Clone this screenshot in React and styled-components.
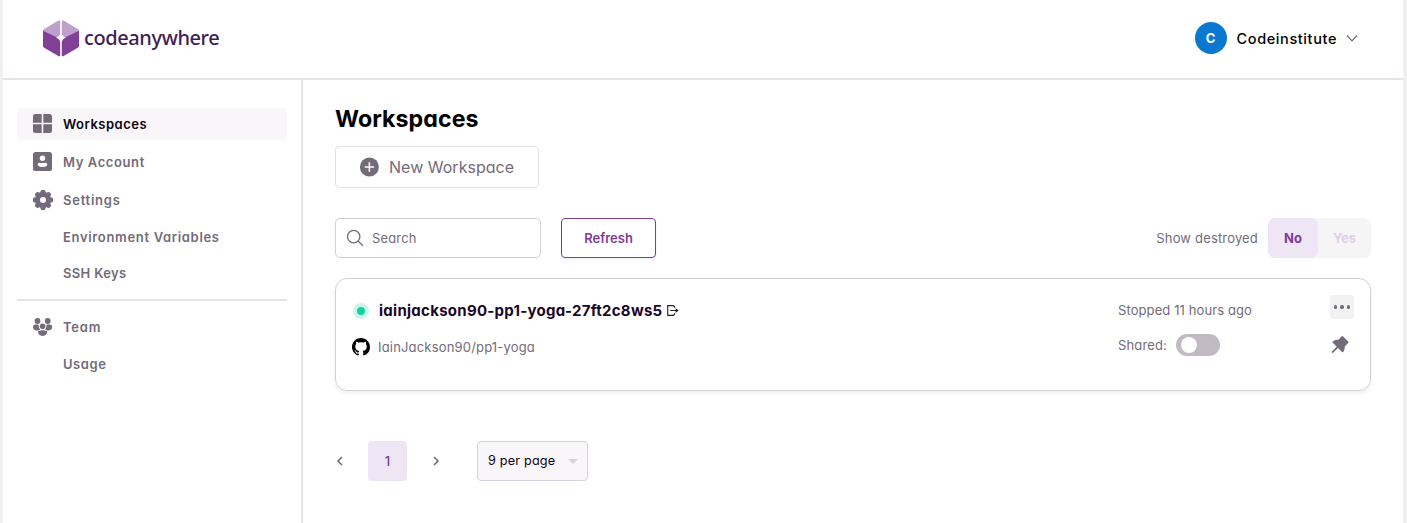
import React from "react";
import styled, { createGlobalStyle, css } from "styled-components";
import { AiFillPushpin } from "react-icons/ai";

const Global = createGlobalStyle`
  * { box-sizing: border-box; }
  body {
    margin: 0;
    background: #f1eff2;
    font-family: Inter, "Liberation Sans", sans-serif;
    font-feature-settings: "cv11" 1;
    color: #736b7a;
    overflow: hidden;
  }
  button { font: inherit; font-feature-settings: inherit; padding: 0; }
  svg { display: block; flex: none; }
`;

const Text = styled.span`
  font-size: ${(p) => p.$size || 13.5}px;
  font-weight: ${(p) => p.$weight || 500};
  letter-spacing: ${(p) => p.$track || 0}px;
  color: ${(p) => p.$color || "inherit"};
  white-space: nowrap;
  line-height: 20px;
`;

const NavText = styled(Text)`
  font-size: 13px;
  font-weight: 600;
`;

const Page = styled.div`
  height: 523px;
  margin: 0 4px 0 3px;
  background: #fff;
  display: flex;
  flex-direction: column;
`;

const Header = styled.header`
  height: 80px;
  flex: none;
  border-bottom: 2px solid #e7e1e9;
  display: flex;
  align-items: center;
  justify-content: space-between;
  padding: 0 45px 2px 40px;
`;

const Brand = styled.div`
  display: flex;
  align-items: center;
  gap: 5px;
`;

const BrandName = styled.span`
  font-family: "Noto Sans", sans-serif;
  font-size: 20px;
  font-weight: 500;
  letter-spacing: -0.4px;
  line-height: 24px;
  color: #421d55;
  padding-bottom: 1px;
`;

const Profile = styled.div`
  display: flex;
  align-items: center;
`;

const ProfileName = styled(Text)`
  padding-top: 1px;
`;

const ProfileCaret = styled.div`
  margin-left: 9px;
`;

const Avatar = styled.div`
  width: 32px;
  height: 32px;
  border-radius: 50%;
  background: #0b78d0;
  color: #fff;
  display: grid;
  place-items: center;
  margin-right: 10px;
`;

const Body = styled.div`
  flex: 1;
  display: flex;
`;

const Sidebar = styled.nav`
  width: 300px;
  flex: none;
  border-right: 2px solid #e7e1e9;
  padding: 28px 14px 0;
`;

const NavItem = styled.a`
  display: flex;
  align-items: center;
  height: 32px;
  margin-bottom: ${(p) => (p.$sub ? 4 : 6)}px;
  padding-left: ${(p) => (p.$sub ? 46 : 15)}px;
  gap: 10px;
  border-radius: 4px;
  ${(p) =>
    p.$active &&
    css`
      background: #f8f6f9;
      color: #0d0412;
    `}
`;

const SubList = styled.div`
  margin-top: -1px;
`;

const Divider = styled.hr`
  height: 2px;
  border: 0;
  background: #e7e1e9;
  margin: 10px 0;
`;

const Main = styled.main`
  flex: 1;
  padding: 24px 32px 0;
`;

const Title = styled.h1`
  margin: 0 0 12px;
  font-size: 23.2px;
  line-height: 30px;
  font-weight: 700;
  letter-spacing: 0.05px;
  color: #000;
`;

const NewButton = styled.button`
  width: 204px;
  height: 42px;
  background: #fff;
  border: 1px solid #e3e1e5;
  border-radius: 4px;
  display: flex;
  align-items: center;
  padding-left: 23px;
  gap: 10px;
  color: #736b7a;
`;

const Tools = styled.div`
  display: flex;
  align-items: center;
  margin-top: 30px;
  height: 40px;
`;

const SearchBox = styled.div`
  width: 206px;
  height: 40px;
  border: 1px solid #d3cfd8;
  border-radius: 5px;
  display: flex;
  align-items: center;
  gap: 8px;
  padding-left: 10px;
`;

const RefreshButton = styled.button`
  width: 95px;
  height: 40px;
  margin-left: 20px;
  background: #fff;
  border: 1px solid #7d3c98;
  border-radius: 4px;
  color: #7d3c98;
  box-shadow: 0 2px 3px rgba(0, 0, 0, 0.05);
  display: flex;
  align-items: center;
  justify-content: center;
`;

const Filter = styled.div`
  margin-left: auto;
  display: flex;
  align-items: center;
  gap: 10px;
`;

const Segments = styled.div`
  display: flex;
  width: 103px;
  height: 40px;
  border-radius: 7px;
  background: #f5f5f5;
`;

const Segment = styled.div`
  width: ${(p) => (p.$on ? 50 : 53)}px;
  border-radius: 7px;
  display: grid;
  place-items: center;
  background: ${(p) => (p.$on ? "#eee5f5" : "transparent")};
  color: ${(p) => (p.$on ? "#7d3c98" : "#e2cfec")};
`;

const Card = styled.section`
  margin-top: 20px;
  height: 113px;
  border: 1px solid #d3cfd8;
  border-radius: 12px;
  box-shadow: 0 2px 4px rgba(0, 0, 0, 0.07);
  display: flex;
  padding: 0 16px;
`;

const Info = styled.div`
  flex: 1;
  padding-top: 21px;
`;

const Line = styled.div`
  display: flex;
  align-items: center;
  height: 22px;
  margin-bottom: ${(p) => p.$gap || 0}px;
`;

const Status = styled.span`
  width: 16px;
  height: 16px;
  border-radius: 50%;
  border: 4px solid #ccf5e9;
  background: #14cf9e;
  margin: 0 10px 0 1px;
`;

const OpenLink = styled.a`
  margin-left: 5px;
  padding-bottom: 1px;
`;

const RepoName = styled(Text)`
  margin-left: 8px;
`;

const State = styled.div`
  width: 212px;
  padding-top: 20px;
`;

const Switch = styled.span`
  width: 44px;
  height: 22px;
  border-radius: 11px;
  background: #c1bac3;
  padding: 3px 5px;
  margin-left: 9px;

  &::after {
    content: "";
    display: block;
    width: 16px;
    height: 16px;
    border-radius: 50%;
    background: #fff;
  }
`;

const Actions = styled.div`
  width: 24px;
  padding-top: 16px;
  display: flex;
  flex-direction: column;
  gap: 14px;
`;

const MoreButton = styled.button`
  width: 24px;
  height: 24px;
  border: 0;
  border-radius: 3px;
  background: #f2f2f2;
  display: flex;
  align-items: center;
  justify-content: center;
  gap: 3px;
`;

const Dot = styled.i`
  width: 3.6px;
  height: 3.6px;
  border-radius: 50%;
  background: #736b7a;
`;

const Pager = styled.div`
  margin-top: 50px;
  height: 40px;
  display: flex;
  align-items: center;
`;

const PageNumber = styled.div`
  width: 39px;
  height: 40px;
  border-radius: 4px;
  background: #eee5f5;
  display: grid;
  place-items: center;
  margin: 0 24px 0 23px;
`;

const PerPage = styled.div`
  width: 111px;
  height: 40px;
  margin-left: 36px;
  border: 1px solid #d8d0dc;
  border-radius: 4px;
  background: #f8f6f9;
  display: flex;
  align-items: center;
  justify-content: space-between;
  padding: 0 9px 0 10px;
`;

const Logo = () => (
  <svg width="36" height="37" viewBox="0 0 36 37">
    <path d="M16 .4Q17.2 0 17.2 1.4V14.5Q16.3 17 13.5 17.6L0.3 10.5Q0 9.7.8 9.2L14.2 1.2Z" fill="#bda1cc" />
    <path d="M20 .4Q18.8 0 18.8 1.4V14.5Q19.7 17 22.5 17.6L35.7 10.5Q36 9.7 35.2 9.2L21.8 1.2Z" fill="#bda1cc" />
    <path d="M0 10.5L13.2 16.9Q16.3 18.2 17.2 21.5V35.5Q17.2 36.7 15.8 36.2L1.2 27.8Q0 27.1 0 25.8Z" fill="#823f98" />
    <path d="M36 10.5L22.8 16.9Q19.7 18.2 18.8 21.5V35.5Q18.8 36.7 20.2 36.2L34.8 27.8Q36 27.1 36 25.8Z" fill="#823f98" />
    <path d="M18 12.8Q19 16.7 23 17.8Q19 19 18 22.8Q17 19 13 17.8Q17 16.7 18 12.8Z" fill="#fff" />
  </svg>
);

const Chevron = ({ d, w, h, stroke = 1.6 }) => (
  <svg width={w} height={h} viewBox={`0 0 ${w} ${h}`} fill="none" stroke="#736b7a" strokeWidth={stroke}>
    <path d={d} />
  </svg>
);

const GridIcon = () => (
  <svg width="21" height="20" viewBox="-.5 .5 21 20" fill="#736b7a">
    <path d="M3 .5H9.2V9.2H0.5V3Q.5.5 3 .5ZM10.8.5H17Q19.5.5 19.5 3V9.2H10.8ZM.5 10.8H9.2V19.5H3Q.5 19.5.5 17ZM10.8 10.8H19.5V17Q19.5 19.5 17 19.5H10.8Z" />
  </svg>
);

const AccountIcon = () => (
  <svg width="21" height="20" viewBox="-.5 .5 21 20">
    <rect x=".5" y=".5" width="19" height="19" rx="2.6" fill="#736b7a" />
    <circle cx="10" cy="6.8" r="2.7" fill="#fff" />
    <path d="M5.2 13.2Q5.2 11.2 7.2 11.2Q10 12 12.8 11.2Q14.8 11.2 14.8 13.2Q14 15.6 10 15.6Q6 15.6 5.2 13.2Z" fill="#fff" />
  </svg>
);

const GearIcon = () => (
  <svg width="21" height="20" viewBox="-.5 0 21 20">
    <g fill="#736b7a">
      <circle cx="10.5" cy="10" r="8.2" />
      {[0, 45, 90, 135].map((a) => (
        <rect key={a} x="8.1" y="0" width="4.8" height="20" rx="1.3" transform={`rotate(${a} 10.5 10)`} />
      ))}
    </g>
    <circle cx="10.5" cy="10" r="3" fill="#fff" />
  </svg>
);

const TeamIcon = () => (
  <svg width="21" height="20" viewBox="-.5 0 21 20" fill="#736b7a">
    <circle cx="5" cy="4" r="2.9" />
    <circle cx="15.2" cy="4" r="2.9" />
    <path d="M.5 10Q.5 7.5 3 7.5H6.2Q5.8 10.8 7.6 12.7Q6.5 13.6 4 13.4Q.7 13.2.5 10Z" />
    <path d="M19.7 10Q19.7 7.5 17.2 7.5H14Q14.4 10.8 12.6 12.7Q13.7 13.6 16.2 13.4Q19.5 13.2 19.7 10Z" />
    <circle cx="10.1" cy="9.2" r="2.8" />
    <path d="M5.5 14.1Q7.8 14 8.5 13.2H11.7Q12.5 14 14.7 14.1Q14.8 18.9 10.1 18.9Q5.4 18.9 5.5 14.1Z" />
  </svg>
);

const PlusIcon = () => (
  <svg width="20" height="20" viewBox="0 0 20 20">
    <circle cx="10.4" cy="10" r="9.5" fill="#736b7a" />
    <path d="M10.4 5.3V14.7M5.7 10H15.1" stroke="#fff" strokeWidth="1.6" />
  </svg>
);

const SearchIcon = () => (
  <svg width="18" height="18" viewBox="0 0 18 18" fill="none" stroke="#736b7a" strokeWidth="1.3">
    <circle cx="7.7" cy="7.6" r="6.2" />
    <path d="M12.1 12L17 16.9" />
  </svg>
);

const OpenIcon = () => (
  <svg width="12" height="11" viewBox="0 0 12 11" fill="none" stroke="#211d24" strokeWidth="1.1">
    <path d="M7.6 2.8V1.8L6.4.6H.7V10.4H6.4L7.6 9.2V8.2M3.2 5.5H10" />
    <path d="M8.6 3L11.6 5.5L8.6 8Z" fill="#211d24" stroke="none" />
  </svg>
);

const GithubIcon = () => (
  <svg width="18" height="18" viewBox="0 0 16 16" fill="#000">
    <path d="M8 0C3.58 0 0 3.58 0 8c0 3.54 2.29 6.53 5.47 7.59.4.07.55-.17.55-.38 0-.19-.01-.82-.01-1.49-2.01.37-2.53-.49-2.69-.94-.09-.23-.48-.94-.82-1.13-.28-.15-.68-.52-.01-.53.63-.01 1.08.58 1.23.82.72 1.21 1.87.87 2.33.66.07-.52.28-.87.51-1.07-1.78-.2-3.64-.89-3.64-3.95 0-.87.31-1.59.82-2.15-.08-.2-.36-1.02.08-2.12 0 0 .67-.21 2.2.82.64-.18 1.32-.27 2-.27s1.36.09 2 .27c1.53-1.04 2.2-.82 2.2-.82.44 1.1.16 1.92.08 2.12.51.56.82 1.27.82 2.15 0 3.07-1.87 3.75-3.65 3.95.29.25.54.73.54 1.48 0 1.07-.01 1.93-.01 2.2 0 .21.15.46.55.38A8.01 8.01 0 0016 8c0-4.42-3.58-8-8-8z" />
  </svg>
);

export default function App() {
  return (
    <>
      <Global />
      <Page>
        <Header>
          <Brand>
            <Logo />
            <BrandName>codeanywhere</BrandName>
          </Brand>
          <Profile>
            <Avatar>
              <Text $size={13} $weight={700}>C</Text>
            </Avatar>
            <ProfileName $size={14.5} $weight={500} $track={0.6} $color="#000">Codeinstitute</ProfileName>
            <ProfileCaret>
              <Chevron w={12} h={8} d="M1 1.5L6 6.8L11 1.5" stroke={1.2} />
            </ProfileCaret>
          </Profile>
        </Header>
        <Body>
          <Sidebar>
            <NavItem $active><GridIcon /><NavText $track={0.5}>Workspaces</NavText></NavItem>
            <NavItem><AccountIcon /><NavText $track={0.6}>My Account</NavText></NavItem>
            <NavItem><GearIcon /><NavText $track={0.75}>Settings</NavText></NavItem>
            <SubList>
              <NavItem $sub><NavText $track={0.67}>Environment Variables</NavText></NavItem>
              <NavItem $sub><NavText $track={0.35}>SSH Keys</NavText></NavItem>
            </SubList>
            <Divider />
            <NavItem><TeamIcon /><NavText $track={0.8}>Team</NavText></NavItem>
            <SubList>
              <NavItem $sub><NavText $track={0.55}>Usage</NavText></NavItem>
            </SubList>
          </Sidebar>
          <Main>
            <Title>Workspaces</Title>
            <NewButton>
              <PlusIcon />
              <Text $size={16} $weight={400} $track={0.02}>New Workspace</Text>
            </NewButton>
            <Tools>
              <SearchBox>
                <SearchIcon />
                <Text $size={13} $weight={400} $track={0.15}>Search</Text>
              </SearchBox>
              <RefreshButton><Text $size={13} $weight={600}>Refresh</Text></RefreshButton>
              <Filter>
                <Text $size={13} $weight={400} $track={0.17}>Show destroyed</Text>
                <Segments>
                  <Segment $on><Text $size={13} $weight={700}>No</Text></Segment>
                  <Segment><Text $size={13} $weight={700}>Yes</Text></Segment>
                </Segments>
              </Filter>
            </Tools>
            <Card>
              <Info>
                <Line $gap={14}>
                  <Status />
                  <Text $size={15} $weight={700} $track={0.27} $color="#1c0628">iainjackson90-pp1-yoga-27ft2c8ws5</Text>
                  <OpenLink><OpenIcon /></OpenLink>
                </Line>
                <Line>
                  <GithubIcon />
                  <RepoName $size={13} $weight={400} $track={0.18}>IainJackson90/pp1-yoga</RepoName>
                </Line>
              </Info>
              <State>
                <Line $gap={13}><Text $size={13} $weight={400} $track={0.1}>Stopped 11 hours ago</Text></Line>
                <Line><Text $size={13} $weight={400} $track={0.15}>Shared:</Text><Switch /></Line>
              </State>
              <Actions>
                <MoreButton><Dot /><Dot /><Dot /></MoreButton>
                <AiFillPushpin size={23} viewBox="60 0 1024 1024" color="#736b7a" />
              </Actions>
            </Card>
            <Pager>
              <Chevron w={10} h={10} d="M7 1L3 5L7 9" />
              <PageNumber><Text $size={13} $color="#7d3c98">1</Text></PageNumber>
              <Chevron w={10} h={10} d="M3 1L7 5L3 9" />
              <PerPage>
                <Text $size={12.7} $weight={400} $track={0.17} $color="#0d0412">9 per page</Text>
                <svg width="10" height="5" viewBox="0 0 10 5"><path d="M0 0H10L5 5Z" fill="#d8d0dc" /></svg>
              </PerPage>
            </Pager>
          </Main>
        </Body>
      </Page>
    </>
  );
}
